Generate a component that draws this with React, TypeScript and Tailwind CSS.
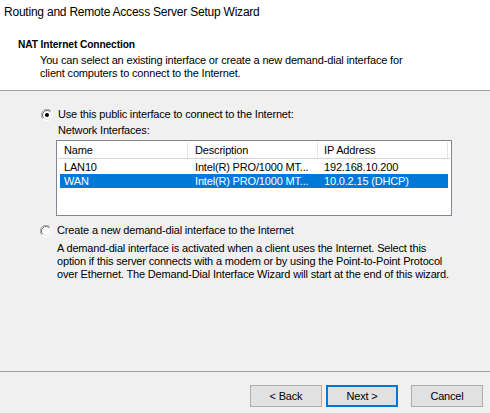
const rows = [
  { name: "LAN10", desc: "Intel(R) PRO/1000 MT...", ip: "192.168.10.200", selected: false },
  { name: "WAN", desc: "Intel(R) PRO/1000 MT...", ip: "10.0.2.15 (DHCP)", selected: true },
];

function Radio({ checked }: { checked: boolean }) {
  return (
    <svg width="12" height="12" viewBox="0 0 12 12" className="shrink-0">
      <circle cx="6" cy="6" r="5.5" fill="#ffffff" />
      <path d="M10.2 2.2 A5.5 5.5 0 0 0 1.8 9.8" fill="none" stroke="#a0a0a0" strokeWidth="1" />
      <path d="M9.3 2.9 A4.4 4.4 0 0 0 2.7 9.1" fill="none" stroke="#696969" strokeWidth="1" />
      <path d="M1.8 9.8 A5.5 5.5 0 0 0 10.2 2.2" fill="none" stroke="#ffffff" strokeWidth="1" />
      <path d="M2.7 9.1 A4.4 4.4 0 0 0 9.3 2.9" fill="none" stroke="#e3e3e3" strokeWidth="1" />
      {checked && <circle cx="6" cy="6" r="2" fill="#000000" />}
    </svg>
  );
}

function Button({ label, primary }: { label: string; primary?: boolean }) {
  return (
    <div
      className={
        primary
          ? "w-[72px] h-[22px] flex items-center justify-center bg-[#e1e1e1] border-2 border-[#0078d7]"
          : "w-[72px] h-[22px] flex items-center justify-center bg-[#e1e1e1] border border-[#adadad]"
      }
    >
      {label}
    </div>
  );
}

export default function App() {
  return (
    <div
      className="w-[490px] h-[413px] flex flex-col text-black text-[11px] leading-[13px] tracking-[-0.17px] overflow-hidden"
      style={{ fontFamily: '"Liberation Sans", Arial, sans-serif' }}
    >
      <div className="h-[91px] bg-white border-b border-[#a0a0a0] shrink-0">
        <div className="pl-[4px] pt-[4px] text-[12px] leading-[16px] tracking-[-0.22px]">
          Routing and Remote Access Server Setup Wizard
        </div>
        <div className="pl-[18px] mt-[18px] font-bold text-[10.2px] tracking-[-0.1px]">NAT Internet Connection</div>
        <div className="pl-[40px] mt-[3px]">
          <div>You can select an existing interface or create a new demand-dial interface for</div>
          <div>client computers to connect to the Internet.</div>
        </div>
      </div>

      <div className="flex-1 bg-[#f0f0f0] pt-[17px]">
        <div className="flex items-center pl-[41px] gap-[5px]">
          <Radio checked />
          <span>Use this public interface to connect to the Internet:</span>
        </div>
        <div className="pl-[58px] mt-[3px]">Network Interfaces:</div>
        <div className="ml-[56px] mt-[3px] w-[396px] h-[76px] bg-white border border-[#828790] p-px">
          <div className="flex h-[17px] border-b border-[#d5d5d5]">
            <div className="w-[130px] pl-[6px] flex items-center border-r border-[#e5e5e5]">Name</div>
            <div className="w-[130px] pl-[7px] flex items-center border-r border-[#e5e5e5]">Description</div>
            <div className="w-[130px] pl-[6px] flex items-center border-r border-[#e5e5e5]">IP Address</div>
          </div>
          <div className="pt-[1px]">
            {rows.map((r) => (
              <div
                key={r.name}
                className={
                  r.selected
                    ? "flex h-[14px] items-center ml-[2px] bg-[#0078d7] text-white w-[388px]"
                    : "flex h-[14px] items-center ml-[2px] w-[388px]"
                }
              >
                <div className="w-[128px] pl-[4px]">{r.name}</div>
                <div className="w-[130px] pl-[7px]">{r.desc}</div>
                <div className="w-[130px] pl-[6px]">{r.ip}</div>
              </div>
            ))}
          </div>
        </div>

        <div className="flex items-center pl-[40px] gap-[5px] mt-[8px]">
          <Radio checked={false} />
          <span>Create a new demand-dial interface to the Internet</span>
        </div>
        <div className="pl-[57px] mt-[5px]">
          <div>A demand-dial interface is activated when a client uses the Internet. Select this</div>
          <div>option if this server connects with a modem or by using the Point-to-Point Protocol</div>
          <div>over Ethernet. The Demand-Dial Interface Wizard will start at the end of this wizard.</div>
        </div>
      </div>

      <div className="h-[42px] shrink-0 bg-[#f0f0f0] border-t border-[#a0a0a0] flex justify-end items-start pt-[13px] pr-[7px]">
        <Button label="< Back" />
        <div className="ml-[4px]">
          <Button label="Next >" primary />
        </div>
        <div className="ml-[13px]">
          <Button label="Cancel" />
        </div>
      </div>
    </div>
  );
}
